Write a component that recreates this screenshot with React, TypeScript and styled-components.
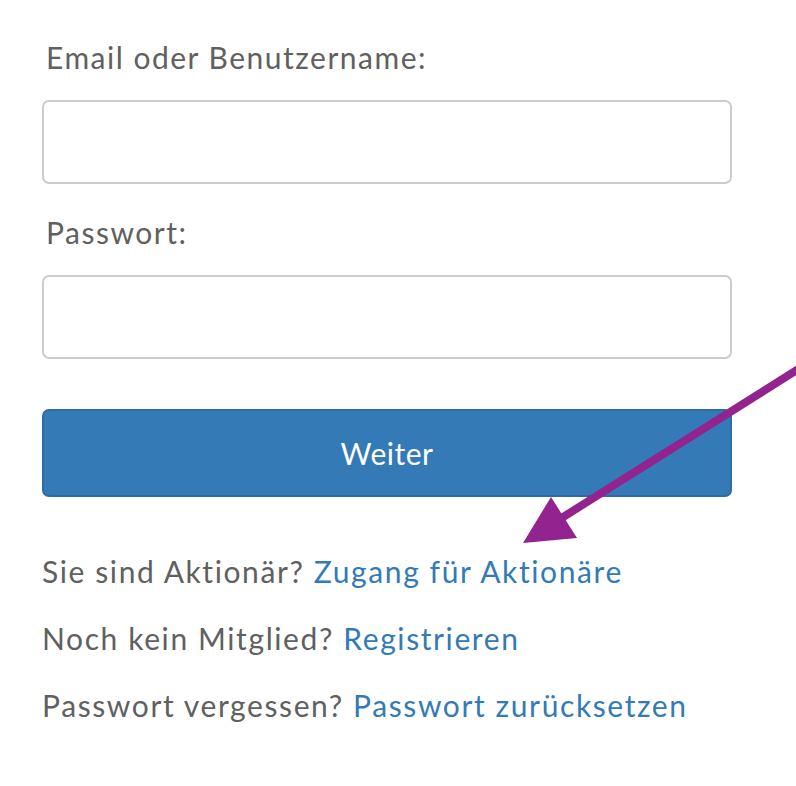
import React from "react";
import styled, { createGlobalStyle } from "styled-components";

const GlobalStyle = createGlobalStyle`
  html, body {
    margin: 0;
    padding: 0;
    background: #ffffff;
  }
  body {
    font-family: Lato, "Noto Sans", "Liberation Sans", sans-serif;
    color: #606060;
  }
`;

const Page = styled.div`
  position: relative;
  width: 796px;
  height: 786px;
  overflow: hidden;
  box-sizing: border-box;
  padding: 37px 0 0 42px;
`;

const Form = styled.form`
  width: 690px;
  display: flex;
  flex-direction: column;
`;

const Field = styled.div`
  display: flex;
  flex-direction: column;
  margin-bottom: 28px;
`;

const Label = styled.label`
  font-size: 30px;
  line-height: 40px;
  letter-spacing: 1.5px;
  color: #606060;
  padding-left: 4px;
  margin-bottom: 23px;
`;

const Input = styled.input`
  box-sizing: border-box;
  height: 84px;
  width: 100%;
  border: 2px solid #cccccc;
  border-radius: 7px;
  background: #ffffff;
  font-size: 28px;
  padding: 0 20px;
  outline: none;
`;

const Button = styled.button`
  margin-top: 22px;
  height: 88px;
  width: 100%;
  border: 2px solid #2e6da4;
  border-radius: 7px;
  background: #337ab7;
  color: #ffffff;
  font-family: inherit;
  font-size: 30px;
  letter-spacing: 0.5px;
  cursor: pointer;
`;

const Links = styled.div`
  margin-top: 54px;
  display: flex;
  flex-direction: column;
  gap: 27px;
`;

const LinkLine = styled.p`
  margin: 0;
  font-size: 30px;
  line-height: 40px;
  letter-spacing: 1.6px;
  color: #606060;
`;

const Link = styled.a`
  color: #337ab7;
  text-decoration: none;
`;

const Arrow = styled.svg`
  position: absolute;
  left: 0;
  top: 0;
  pointer-events: none;
`;

export default function App() {
  return (
    <>
      <GlobalStyle />
      <Page>
        <Form onSubmit={(e) => e.preventDefault()}>
          <Field>
            <Label htmlFor="user">Email oder Benutzername:</Label>
            <Input id="user" type="text" />
          </Field>
          <Field>
            <Label htmlFor="pass">Passwort:</Label>
            <Input id="pass" type="password" />
          </Field>
          <Button type="submit">Weiter</Button>
        </Form>
        <Links>
          <LinkLine>
            Sie sind Aktionär? <Link href="#">Zugang für Aktionäre</Link>
          </LinkLine>
          <LinkLine>
            Noch kein Mitglied? <Link href="#">Registrieren</Link>
          </LinkLine>
          <LinkLine>
            Passwort vergessen? <Link href="#">Passwort zurücksetzen</Link>
          </LinkLine>
        </Links>
        <Arrow width="796" height="786" viewBox="0 0 796 786">
          <line x1="800" y1="368" x2="560" y2="519" stroke="#92238f" strokeWidth="8" />
          <polygon points="523,543 551,497 577,538" fill="#92238f" />
        </Arrow>
      </Page>
    </>
  );
}
